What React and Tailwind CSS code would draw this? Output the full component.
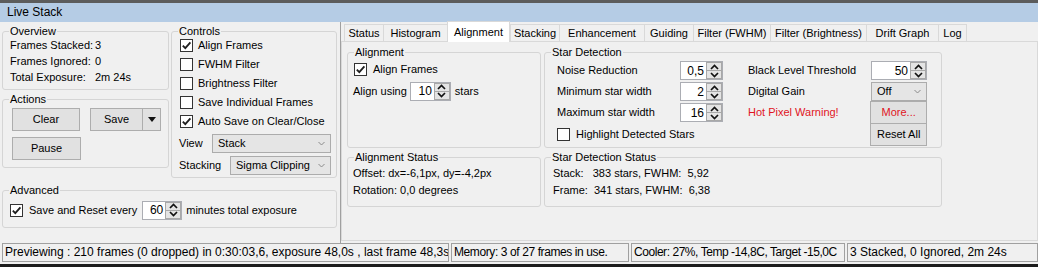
import React from "react";

const Check = ({ checked }) => (
  <span className="w-[13px] h-[13px] border border-[#333333] bg-white flex items-center justify-center shrink-0">
    {checked && (
      <svg width="11" height="11" viewBox="0 0 11 11">
        <path d="M1.8 5.6 L4.3 8.2 L9.4 2.3" fill="none" stroke="#1e1e1e" strokeWidth="1.8" />
      </svg>
    )}
  </span>
);

const Group = ({ title, className, children }) => (
  <fieldset className={"border border-[#d5d5d5] rounded-[3px] min-w-0 " + className}>
    <legend className="ml-[6px] px-[1px] leading-[14px]">{title}</legend>
    {children}
  </fieldset>
);

const Btn = ({ children, className }) => (
  <div className={"h-[23px] border border-[#adadad] bg-[#e1e1e1] flex items-center justify-center " + className}>
    {children}
  </div>
);

const SmallChevron = () => (
  <svg width="7" height="5" viewBox="0 0 7 5">
    <polyline points="0.5,1 3.5,4 6.5,1" fill="none" stroke="#8a8a8a" strokeWidth="1" />
  </svg>
);

const Combo = ({ value, className }) => (
  <div className={"h-[19px] border border-[#acacac] bg-[#e5e5e5] flex items-center justify-between pl-[5px] pr-[5px] " + className}>
    <span>{value}</span>
    <SmallChevron />
  </div>
);

const Arrow = ({ up }) => (
  <svg width="9" height="6" viewBox="0 0 9 6">
    <polyline
      points={up ? "1,5 4.5,1.5 8,5" : "1,1 4.5,4.5 8,1"}
      fill="none"
      stroke="#111"
      strokeWidth="1.7"
    />
  </svg>
);

const Spin = ({ value, className }) => (
  <div className={"flex h-[19px] border border-[#abadb3] bg-white " + className}>
    <div className="flex-1 flex items-center justify-end pr-[2px] text-[12px]">{value}</div>
    <div className="w-[16px] flex flex-col bg-[#e4e4e4]">
      <div className="flex-1 flex items-center justify-center border border-[#a8a8a8]">
        <Arrow up />
      </div>
      <div className="flex-1 flex items-center justify-center border border-t-0 border-[#a8a8a8]">
        <Arrow />
      </div>
    </div>
  </div>
);

const CheckRow = ({ checked, label, className }) => (
  <div className={"flex items-center " + className}>
    <Check checked={checked} />
    <span className="ml-[5px]">{label}</span>
  </div>
);

export default function App() {
  const tabs = [
    ["Status", "w-[39px]", false],
    ["Histogram", "w-[64px]", false],
    ["Alignment", "w-[63px]", true],
    ["Stacking", "w-[49px]", false],
    ["Enhancement", "w-[85px]", false],
    ["Guiding", "w-[49px]", false],
    ["Filter (FWHM)", "w-[77px]", false],
    ["Filter (Brightness)", "w-[96px]", false],
    ["Drift Graph", "w-[72px]", false],
    ["Log", "w-[29px] border-r", false],
  ];

  return (
    <div className="w-[1038px] h-[267px] bg-[#f0f0f0] overflow-hidden flex flex-col font-['Liberation_Sans',Arial,sans-serif] text-[11px] text-black">
      <div className="h-[3px] bg-[#5c5c5c]" />
      <div className="h-[19px] bg-[#b5cce5] text-[12px] leading-[19px] pl-[7px]">Live Stack</div>

      <div className="flex h-[221px]">
        {/* Left panel */}
        <div className="w-[340px] flex flex-col">
          <div className="flex pt-[2px]">
            <div className="ml-[2px] w-[167px] flex flex-col">
              <Group title="Overview" className="h-[66px]">
                <div className="pl-[7px] mt-[-1px] leading-[16px]">
                  <div className="flex"><span className="w-[85px]">Frames Stacked:</span><span>3</span></div>
                  <div className="flex"><span className="w-[85px]">Frames Ignored:</span><span>0</span></div>
                  <div className="flex"><span className="w-[85px]">Total Exposure:</span><span>2m 24s</span></div>
                </div>
              </Group>
              <Group title="Actions" className="mt-[2px] h-[76px]">
                <div className="pl-[9px]">
                  <div className="flex mt-[2px]">
                    <Btn className="w-[68px]">Clear</Btn>
                    <Btn className="ml-[10px] w-[53px]">Save</Btn>
                    <Btn className="-ml-px w-[19px]">
                      <svg width="8" height="5" viewBox="0 0 8 5">
                        <polygon points="0,0 8,0 4,5" fill="#111" />
                      </svg>
                    </Btn>
                  </div>
                  <Btn className="mt-[6px] w-[69px]">Pause</Btn>
                </div>
              </Group>
            </div>
            <Group title="Controls" className="ml-[2px] w-[166px] h-[154px]">
              <div className="pl-[8px] pr-[5px] mt-[-2px]">
                <CheckRow checked label="Align Frames" className="h-[19px]" />
                <CheckRow label="FWHM Filter" className="h-[19px]" />
                <CheckRow label="Brightness Filter" className="h-[19px]" />
                <CheckRow label="Save Individual Frames" className="h-[19px]" />
                <CheckRow checked label="Auto Save on Clear/Close" className="h-[19px]" />
                <div className="mt-[2px] h-[20px] flex items-center justify-between">
                  <span className="-ml-[1px]">View</span>
                  <Combo value="Stack" className="w-[119px]" />
                </div>
                <div className="mt-[2px] h-[21px] flex items-center justify-between">
                  <span className="-ml-[1px]">Stacking</span>
                  <Combo value="Sigma Clipping" className="w-[101px]" />
                </div>
              </div>
            </Group>
          </div>
          <Group title="Advanced" className="ml-[2px] mt-[5px] w-[335px] h-[45px]">
            <div className="pl-[7px] mt-[2px] h-[22px] flex items-center">
              <Check checked />
              <span className="ml-[6px]">Save and Reset every</span>
              <Spin value="60" className="ml-[5px] w-[40px]" />
              <span className="ml-[4px]">minutes total exposure</span>
            </div>
          </Group>
        </div>

        <div className="w-px bg-[#a0a0a0]" />

        {/* Right panel */}
        <div className="flex-1 flex flex-col">
          <div className="h-[19px] flex items-end pl-[3px]">
            {tabs.map(([t, w, sel]) =>
              sel ? (
                <div
                  key={t}
                  className={"h-[21px] -mb-px relative z-10 bg-white border-t border-l border-r border-[#d9d9d9] flex items-center justify-center " + w}
                >
                  {t}
                </div>
              ) : (
                <div
                  key={t}
                  className={"h-[17px] border-t border-l border-[#d9d9d9] flex items-center justify-center " + w}
                >
                  {t}
                </div>
              )
            )}
          </div>
          <div className="h-[200px] border border-[#d9d9d9] flex flex-col">
            <div className="flex mt-[3px]">
              <Group title="Alignment" className="ml-[5px] w-[194px] h-[103px]">
                <CheckRow checked label="Align Frames" className="pl-[6px] h-[20px] [&>span:last-child]:ml-[6px]" />
                <div className="pl-[5px] mt-[1px] h-[22px] flex items-center">
                  <span>Align using</span>
                  <Spin value="10" className="ml-[3px] w-[41px]" />
                  <span className="ml-[4px]">stars</span>
                </div>
              </Group>
              <Group title="Star Detection" className="ml-[3px] w-[398px] h-[103px]">
                <div className="flex pl-[12px] mt-[1px]">
                  <div className="w-[166px] flex flex-col">
                    <div className="h-[21px] flex items-center">
                      <span className="w-[123px]">Noise Reduction</span>
                      <Spin value="0,5" className="w-[43px]" />
                    </div>
                    <div className="h-[21px] flex items-center">
                      <span className="w-[123px]">Minimum star width</span>
                      <Spin value="2" className="w-[43px]" />
                    </div>
                    <div className="h-[21px] flex items-center">
                      <span className="w-[123px]">Maximum star width</span>
                      <Spin value="16" className="w-[43px]" />
                    </div>
                    <CheckRow label="Highlight Detected Stars" className="h-[22px] [&>span:last-child]:ml-[6px]" />
                  </div>
                  <div className="ml-[25px] w-[179px] flex flex-col">
                    <div className="h-[21px] flex items-center">
                      <span className="w-[123px]">Black Level Threshold</span>
                      <Spin value="50" className="w-[56px]" />
                    </div>
                    <div className="h-[21px] flex items-center">
                      <span className="w-[123px]">Digital Gain</span>
                      <Combo value="Off" className="w-[56px]" />
                    </div>
                    <div className="h-[21px] flex items-center">
                      <span className="w-[123px] text-[#e0141e]">Hot Pixel Warning!</span>
                      <Btn className="w-[57px] h-[20px] text-[#e0141e]">More...</Btn>
                    </div>
                    <div className="flex">
                      <span className="w-[123px]" />
                      <Btn className="w-[57px] h-[20px]">Reset All</Btn>
                    </div>
                  </div>
                </div>
              </Group>
            </div>
            <div className="flex mt-[2px]">
              <Group title="Alignment Status" className="ml-[5px] w-[194px] h-[57px]">
                <div className="pl-[5px] mt-[1px]">
                  <div className="h-[17px] flex items-center">Offset: dx=-6,1px, dy=-4,2px</div>
                  <div className="h-[17px] flex items-center">Rotation: 0,0 degrees</div>
                </div>
              </Group>
              <Group title="Star Detection Status" className="ml-[3px] w-[398px] h-[57px]">
                <div className="pl-[8px] mt-[1px] whitespace-pre">
                  <div className="h-[17px] flex items-center">{"Stack:   383 stars, FWHM:  5,92"}</div>
                  <div className="h-[17px] flex items-center">{"Frame:  341 stars, FWHM:  6,38"}</div>
                </div>
              </Group>
            </div>
          </div>
        </div>
      </div>

      {/* Status bar */}
      <div className="h-[21px] flex text-[12px] leading-[17px] whitespace-nowrap">
        <div className="ml-[2px] w-[447px] h-[19px] border border-[#a0a0a0] pl-[2px] overflow-hidden">
          Previewing : 210 frames (0 dropped) in 0:30:03,6, exposure 48,0s , last frame 48,3s
        </div>
        <div className="ml-[2px] w-[178px] h-[19px] border border-[#a0a0a0] pl-[2px] overflow-hidden tracking-[-0.4px]">
          Memory: 3 of 27 frames in use.
        </div>
        <div className="ml-[2px] w-[214px] h-[19px] border border-[#a0a0a0] pl-[2px] overflow-hidden tracking-[-0.45px]">
          Cooler: 27%, Temp -14,8C, Target -15,0C
        </div>
        <div className="ml-[2px] flex-1 h-[19px] border border-[#a0a0a0] pl-[2px] overflow-hidden">
          3 Stacked, 0 Ignored, 2m 24s
        </div>
      </div>
      <div className="h-[3px] bg-[#1c1c1c]" />
    </div>
  );
}
